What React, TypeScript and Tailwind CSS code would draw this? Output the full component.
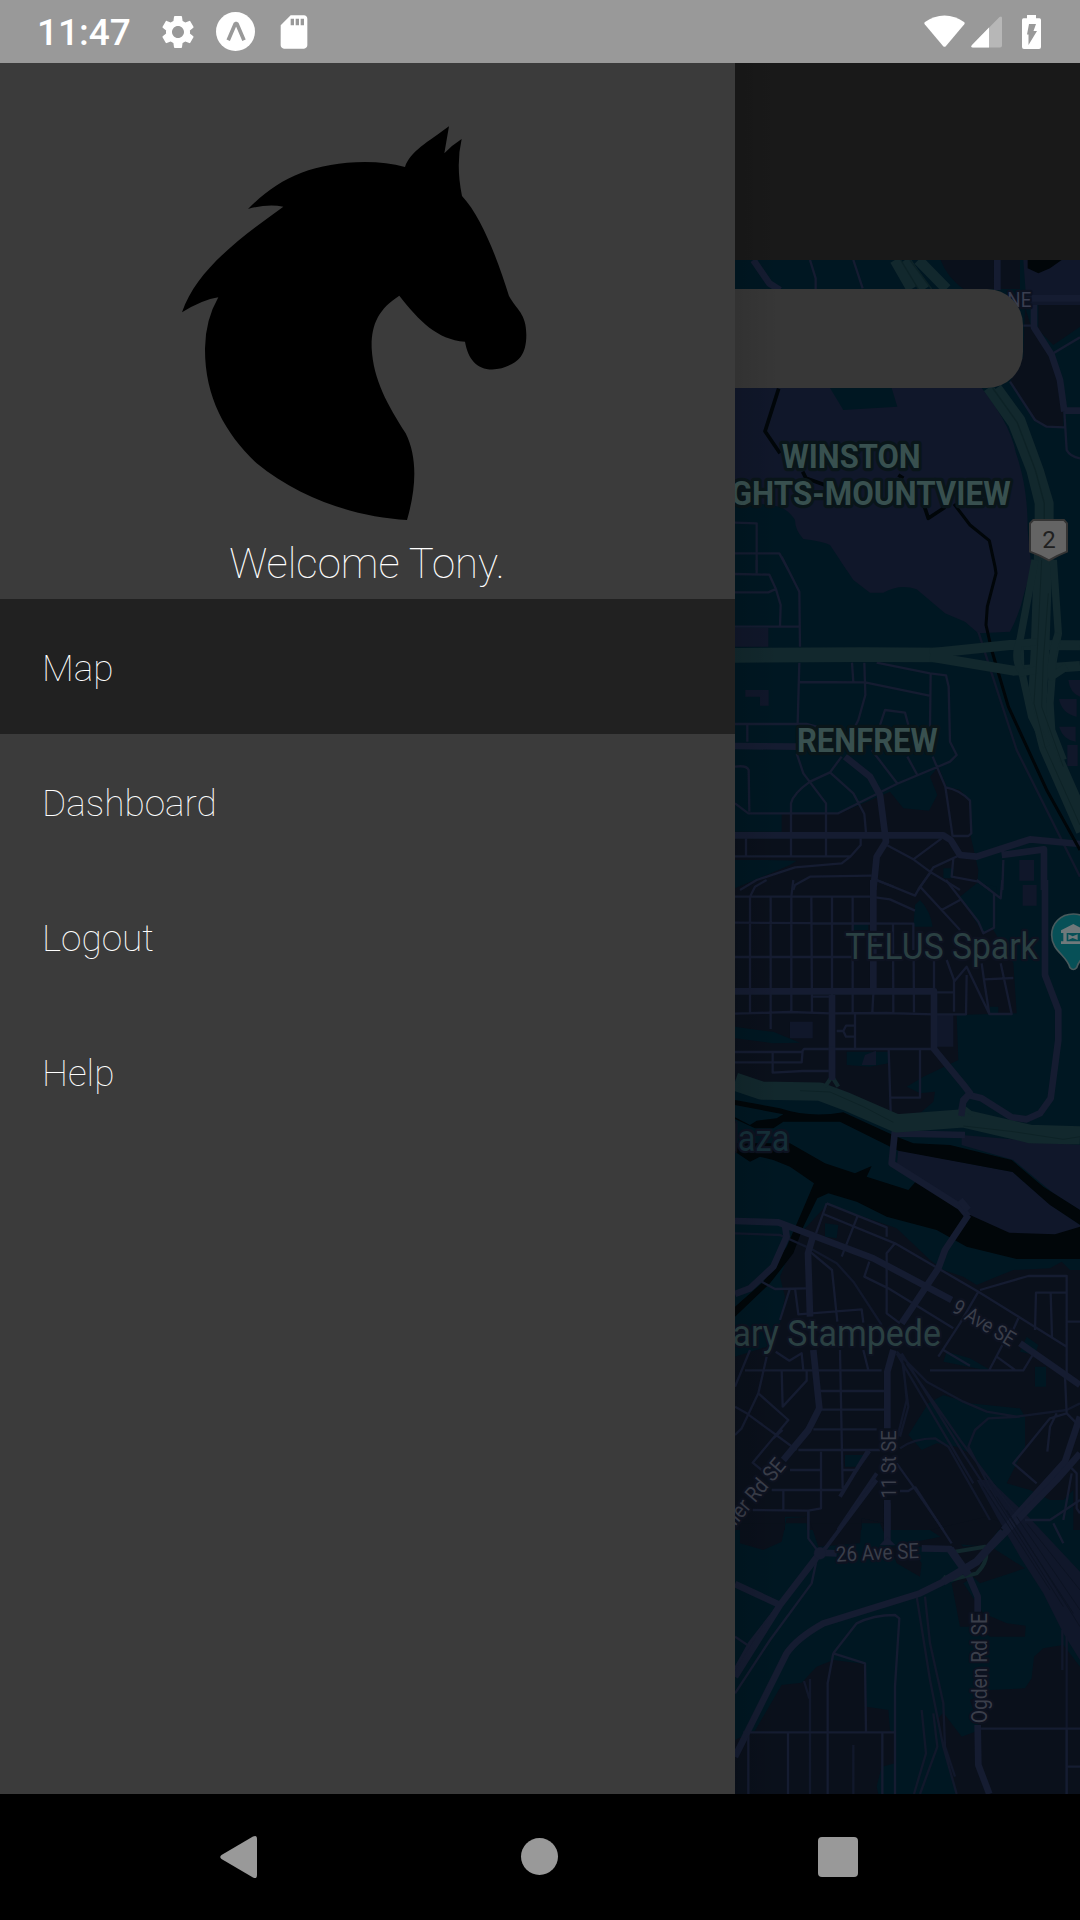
import React from "react";
import { MdSettings, MdSdCard } from "react-icons/md";

const LAND = "#001722";
const URBAN = "#0a101b";
const PARK = "#10172a";
const ROAD = "#151c31";
const HIGHWAY = "#12282d";
const WATER = "#010609";

type Section = {
  y: number;
  urban?: string;
  land?: string;
  park?: string;
  water?: string;
  creek?: string;
  rail?: string;
  thin?: string;
  mid?: string;
  wide?: string;
};

const sections: Section[] = [
  {
    y: 240,
    urban:
      "M632 60H870V147H700Q650 110 632 60ZM885 200L905 265L965 345L1000 500V560H950L915 540L840 425L880 350ZM925 195H1050V260L970 315L925 270Z",
    park:
      "M15 444H755C800 500 845 570 858 640C885 720 893 790 893 870L905 990H350L300 915Q280 905 220 897Q195 870 195 840Q180 815 150 800L15 780ZM880 60H1050V195H890Z",
    water: "M893 60H995L960 85L925 100L893 85Z",
    creek: "M146 446L105 574L150 640M218 695L228 715L300 740M505 705L520 715M580 790L595 835L645 802",
    thin:
      "M240 60L257 115V147M370 60L398 145M970 340L1050 292M880 257H905M840 425L915 540L950 560L1003 562M1003 515L1010 630Q1020 650 1050 655M15 848L80 850V990M15 940H148L175 990",
    mid: "",
    wide: "M70 60L118 130L150 150M802 60V150M905 175H1050M912 195V262L965 345L990 420L1003 515M1003 512H1050",
  },
  {
    y: 560,
    park:
      "M330 0H915L885 90Q870 160 840 215L745 220L705 185L645 160L560 88Q510 70 460 98H420L370 60ZM15 204H115V260H15ZM46 390H116V437H90V410H46ZM1015 360H1050V410Q1020 400 1015 360ZM987 417H1040V470Q995 460 987 417ZM987 500H1037V545Q1000 540 987 500ZM1012 555H1043V618H1012ZM868 900H912V962H868Z",
    rail: "M745 215L785 340L860 570L1050 950",
    thin:
      "M80 0V40M15 42L118 44L138 88L152 135L150 198M15 97H115L140 86M15 200H208M155 -10L208 95L210 260M208 308L203 490M208 366L405 367L598 407M366 308L370 366M403 308L406 405L385 480L375 500M440 308L600 340L648 346L656 380L660 545L680 585L660 605L500 672L325 760H55L15 730M602 340L600 500M450 495L465 450L525 458L535 495M15 492H230L260 500M52 492V545M15 620Q50 615 56 630L58 755M200 580L220 640L288 730V887M335 590L300 637L240 665Q190 700 183 730V887M300 637L370 700L403 762L408 818M425 570L503 672M532 590L562 645M608 590L646 680L668 830M648 682Q690 690 720 722L724 820L715 828H668M15 889H362M48 835V887M392 835V855L362 889L335 910L195 922L80 960L30 990M470 855L550 898L635 835M550 898L600 935L650 965L690 990M690 885L610 922L565 990M670 895L665 950L745 965L780 990M820 900L817 990M425 947L240 950L195 975L190 990M425 955L490 980",
    mid: "",
    wide:
      "M15 558L200 560M345 590L420 650L450 705L468 845L440 890L430 990M15 826H640L662 840L690 885L740 890L900 838L1050 852M815 885L942 868V990",
  },
  {
    y: 880,
    urban:
      "M155 -200H330L480 -265L520 -215L597 -208L622 -255L600 -310L625 -340L650 -280L690 -270L720 -238V-140L745 -30L740 30L690 50L790 150L850 250L860 400L680 405L685 540L580 590L530 620L570 640L615 635L610 665L570 700L500 715L15 600V-145H155Z",
    land:
      "M15 440Q80 450 130 455L210 488L130 490L15 475ZM350 515H475V550L420 560L350 555ZM555 75L570 60Q600 90 608 140H550ZM15 -60H110L200 -58L180 -45L15 25ZM690 50L740 10L800 20V130L760 160ZM640 -35H670V-5H640ZM370 130H415V150H370ZM780 380H805V400H780Z",
    park:
      "M180 425H248V475H180ZM610 405H670V500H610ZM395 555L405 525L438 512V555ZM878 15H920V77H878ZM695 765L1050 795V990L970 940L850 840L695 795Z",
    water:
      "M15 660L150 685Q240 715 340 697L500 770L550 790L660 795L845 840L940 920L1050 990V1034L960 975L848 876L505 812L330 725H160L130 745L75 745L15 717V712L60 735L80 722L140 715L160 703L15 675ZM15 790H180L285 850L375 880L425 858L410 890L535 930L557 905L700 990L720 1005L838 1058L975 1063L1050 1040V1137H860L710 1100L620 1050L470 1010L380 965L295 940L262 955L220 1040L190 1120L120 1210L15 1310V1280L100 1205L170 1100L218 990L252 910L180 860L130 840L90 830L60 845L15 815Z",
    thin:
      "M15 50H420L480 58L555 92M15 128L550 131V210M15 231H380M60 50V397M122 50V447M184 50V397M244 50L246 397M306 50V397M368 50V397M489 131L490 397M551 240L552 397M612 240V330M430 340L427 397M15 401L180 396L300 400L470 399L610 403H708L710 285M375 401V507M320 453H340L348 437H375M340 453L348 470H375M15 516H215L222 507H612M15 547H215L218 510M128 516V578L218 573H300M476 507L482 695M570 507V653H482M245 350H300M440 0L555 47L570 20L600 -20M570 20L635 90L690 150M648 0L745 125L760 160L792 143V40M690 60L635 90M650 240L672 300V395M672 337H615M672 305L710 260L778 402H845L812 250M755 250L762 300L778 402M762 298L850 294M190 0L184 50M60 50L75 20L110 0M740 0L812 55L817 0",
    mid: "",
    wide:
      "M430 0V325M15 334H612V507L705 620L720 640L700 660L692 705M306 345V600M715 645L755 655L845 712L890 718L930 700L962 655L985 480V390L945 285V0M495 750L485 850L690 980L715 1010M495 760L705 765",
  },
  {
    y: 1200,
    urban:
      "M200 110L240 70L290 15L400 50L500 85L600 180L640 210L700 230L740 255L800 230L850 210L960 205L995 185L1020 210H1050V990H15V470L110 440L150 370L165 290L150 230Z",
    land:
      "M595 610L640 585L720 610L870 625L885 650V740L830 850L900 870L960 900L1000 900L1030 870V990H870L720 760L680 740L620 730L575 750L535 705ZM285 70L325 75L320 115L285 110ZM650 455L720 475L790 515L640 485ZM915 500H948V560H915ZM345 765H415L385 800H345ZM890 410L925 435L915 465L870 455ZM165 950H230V990H165ZM395 955L460 970V990H395Z",
    rail:
      "M15 100L150 105L240 145L320 190L370 245L455 375M515 460L700 760L850 990M500 460L730 850M530 490L690 720L870 960M515 470L535 620L510 710M520 490L530 600L500 720M500 455L590 545L700 605L770 635L860 650L1010 630L1050 610M510 745Q550 715 615 715L655 740L780 960M870 650L775 655L735 690L715 740L800 900L850 980",
    thin:
      "M290 10L470 82V110M290 10L258 100M280 42L495 130L745 275L1010 440M495 130L470 160V340L510 370M382 50L335 170M240 155L306 210L322 365M418 185L403 230L475 265L670 385M95 245L135 267L230 265M180 265L150 360M195 265L205 343L395 328L400 368M745 275L690 370L625 470M640 450L720 497M750 270L895 228H1010V530M915 390L918 278H1010M962 280L966 410M865 355L845 400M1010 365H1050M600 511H880L908 465M820 430L778 510M800 470L855 510M45 511H455M60 450L15 560M110 470L85 580L35 685L15 705M155 511L158 620L230 542V511M85 580L175 660L68 788L95 810M15 620L50 640L200 750M130 715L158 690M137 455L178 482L215 460L220 511M330 450L338 865M400 450L415 511M270 573H465M270 629H465M250 688H440M205 750H450M180 810H270M340 810H385M125 870H338L420 755M68 930L235 932L273 925V755M160 870V930M235 932V990M500 790L550 860L640 990M510 873H535L555 860M1005 530L1010 640L1050 680M1010 640L960 655L850 790L920 850M980 640L960 680L952 755M1020 800L1040 820V925L1050 940M1025 820L1000 960",
    mid: "M415 750L330 890M440 820L325 990",
    wide:
      "M15 63L145 67L430 175L665 300M870 430L1050 555M165 75L170 110L130 200L60 265L15 282M250 105L234 160L240 350M250 450L268 625L235 690L160 780M715 45L645 150L625 205L515 370M490 450L472 515V685M472 910V990M1050 650L1005 785L820 990M690 0L715 30",
  },
  {
    y: 1480,
    urban:
      "M30 130V190L100 210L155 185L170 115L235 110L265 200L390 190L395 115L460 130L480 200L550 210L575 250L570 290L500 250L480 200L660 165L700 200L775 195L885 265L750 310L730 290L700 310L760 400L830 430L887 437L885 470H780L740 440H690L665 310L700 290L660 200H480L450 130H30ZM75 752L155 615L215 608L260 560L310 540L405 552L410 680L475 690L480 750L495 760V942H15V780ZM640 698L695 770L750 750L720 660L780 630L885 625L905 595L912 530L940 505L1000 495L1050 560V942H680L620 720ZM600 150L770 110L820 130L770 200L660 190Z",
    land: "M440 920L455 860L495 850V942H445Z",
    park: "M740 0H780L895 110L1050 275V540L1000 460L940 340L870 230L800 110Z",
    rail:
      "M560 350L600 600L640 800L680 942M585 350L600 490L640 670L645 800L675 890M575 690L588 820L552 942M610 700L622 800L570 942M240 597V942M222 603L238 655M370 795V942M997 450V570M1010 470V942",
    thin:
      "M235 90V175L265 215L245 310L120 480L15 640M555 20L665 190M310 520L380 430Q430 405 495 405L508 415L495 620V942M310 520L405 550L408 755M310 520L293 610V942M15 470L60 500M40 757H495M55 757V942M174 757V942M457 757V942M750 746H1050M1010 746V942M1010 860H1050M885 120H960L1050 60M970 130L1000 190",
    mid: "M440 0L290 200L230 270L60 490L15 570",
    wide:
      "M472 60V195M265 218L320 220M575 205L660 207L715 285L743 350V395M1050 -80L980 0L740 245L640 305L570 340L280 430Q200 475 170 520L15 830M15 312L150 375M265 225L150 375L15 590M743 735L745 855L778 942",
  },
];

const layerAt = (y: number) => `translate(730 ${y}) scale(0.33333)`;

function MapLabel(props: {
  x: number;
  y: number;
  size: number;
  length: number;
  color: string;
  halo?: string;
  haloWidth?: number;
  weight?: number;
  rotate?: number;
  children: string;
}) {
  return (
    <text
      x={props.x}
      y={props.y}
      fontSize={props.size}
      fontWeight={props.weight ?? 400}
      fill={props.color}
      stroke={props.halo ?? "#0d1220"}
      strokeWidth={props.haloWidth ?? 14}
      strokeLinejoin="round"
      paintOrder="stroke"
      textLength={props.length}
      lengthAdjust="spacingAndGlyphs"
      transform={props.rotate ? `rotate(${props.rotate} ${props.x} ${props.y})` : undefined}
    >
      {props.children}
    </text>
  );
}

function CityMap() {
  return (
    <svg className="block h-full w-full font-[Roboto]" viewBox="735 260 345 1534" fill="none">
      <rect x="735" y="259" width="345" height="1536" fill={LAND} />
      {sections.map((s) => (
        <g key={s.y} transform={layerAt(s.y)}>
          <path d={s.urban} fill={URBAN} />
          <path d={s.land} fill={LAND} />
          <path d={s.park} fill={PARK} />
        </g>
      ))}
      <g transform={layerAt(240)}>
        <path d="M300 444H485L502 500L340 510Z" fill={LAND} />
      </g>
      <g transform={layerAt(880)}>
        <path d="M505 810L848 876L955 970L1050 1035V1045L975 1068L838 1062L720 1014L560 910L500 860Z" fill={PARK} />
      </g>
      {sections.map((s) => (
        <g key={s.y} transform={layerAt(s.y)} strokeLinejoin="round">
          <path d={s.water} fill={WATER} />
          <path d={s.creek} stroke={WATER} strokeWidth="11" />
          <path d={s.rail} stroke="#11182b" strokeWidth="7" />
          <path d={s.thin} stroke={ROAD} strokeWidth="7" />
          <path d={s.mid} stroke={ROAD} strokeWidth="12" />
          <path d={s.wide} stroke={ROAD} strokeWidth="20" />
        </g>
      ))}

      {/* Creek running beside the freeway */}
      <g transform={layerAt(560)} stroke={WATER} strokeLinejoin="round">
        <path d="M672 -168L720 -105L778 -58L795 20L798 40L772 140L768 195L785 270L835 440L950 690L1050 870" strokeWidth="9" />
      </g>

      {/* Freeways and interchange */}
      <g stroke={HIGHWAY} strokeLinejoin="round">
        <g transform={layerAt(240)}>
          <path d="M495 60L545 147M525 60L585 147M565 60L650 147" strokeWidth="32" />
          <path d="M775 444L850 550L905 690L930 790V990M800 444L870 540L925 690L955 790V990" strokeWidth="32" />
          <path d="M788 444L862 548L916 690L943 790V990M512 60L565 147M540 60L605 147" stroke="#0d2226" strokeWidth="4" />
        </g>
        <g transform={layerAt(560)}>
          <path d="M15 286L400 284L660 285" strokeWidth="44" />
          <path d="M600 280L840 255L1050 256M600 290L850 332L1050 318" strokeWidth="30" />
          <path d="M940 -20L930 270L922 430L955 560L1065 810" strokeWidth="56" />
          <path d="M915 0L870 240L872 320L905 470L950 560M970 0L985 220L970 300L960 430L965 510L1000 600" strokeWidth="22" />
          <path d="M870 240Q850 290 872 330M985 220Q960 290 965 350L1010 320M870 250L920 245M865 340L920 330" strokeWidth="22" />
          <path d="M935 0L922 270L912 430L945 560L1050 795M955 100L940 300L935 440L1000 620" stroke="#0d2226" strokeWidth="3" />
        </g>
        <g transform={layerAt(880)}>
          <path d="M15 605L95 632L270 635L350 665L500 730L700 715L900 762L1050 766" strokeWidth="55" />
          <path d="M285 620L306 590L325 620M690 705L705 685L730 705" strokeWidth="12" />
          <path d="M210 632L300 636L400 680L490 727M700 738L850 755L1000 778L1050 770" stroke="#0d2226" strokeWidth="3" />
        </g>
        <g transform={layerAt(1480)}>
          <path d="M675 215L765 200Q780 240 740 280L660 300L640 290" strokeWidth="12" />
        </g>
      </g>
      <g transform={layerAt(880)} stroke={ROAD} strokeWidth="19">
        <path d="M306 500V600M720 640L700 665L694 708" />
      </g>
      <g transform={layerAt(1480)} stroke={ROAD}>
        <path d="M820 155L740 245L640 305M660 207L715 285" strokeWidth="24" />
        <circle cx="270" cy="220" r="18" fill={ROAD} />
        <path d="M450 195L472 170L495 195Z" fill={ROAD} />
        <path d="M760 20L960 330M780 30L1000 380M800 50L1030 400M830 90L1050 440M860 110L1050 390M890 130L1050 330" stroke="#0c1322" strokeWidth="3" />
      </g>

      {/* Labels */}
      <g transform={layerAt(240)}>
        <MapLabel x={832} y={202} size={63} length={72} color="#3a3e50">NE</MapLabel>
        <MapLabel x={155} y={684} size={100} length={417} weight={700} color="#38504f" halo="#091519" haloWidth={20}>WINSTON</MapLabel>
        <MapLabel x={-145} y={795} size={100} length={987} weight={700} color="#38504f" halo="#091519" haloWidth={20}>HEIGHTS-MOUNTVIEW</MapLabel>
        <path d="M910 840H1002L1011 850V935Q985 945 957 961Q928 945 900 935V850Z" fill="#646464" stroke="#343434" strokeWidth="6" />
        <text x="957" y="925" fontSize="72" textAnchor="middle" fill="#202020">2</text>
      </g>
      <g transform={layerAt(560)}>
        <MapLabel x={201} y={577} size={100} length={422} weight={700} color="#38504f" halo="#091519" haloWidth={20}>RENFREW</MapLabel>
      </g>
      <g transform={layerAt(880)}>
        <MapLabel x={346} y={237} size={109} length={577} color="#2a4042">TELUS Spark</MapLabel>
        <MapLabel x={-62} y={813} size={109} length={240} color="#152f38">Plaza</MapLabel>
        <path d="M1030 102C991 102 965 131 965 165C965 213 1010 225 1020 263Q1030 274 1040 263C1050 225 1095 213 1095 165C1095 131 1069 102 1030 102Z" fill="#075057" stroke="#485a5d" strokeWidth="5" />
        <path d="M1030 132L993 151V159H1000V184H993V192H1067V184H1060V159H1067V151ZM1010 159H1050V184H1010Z" fill="#70797b" fillRule="evenodd" />
        <path d="M1015 163L1028 169L1043 163V180L1028 174L1015 180Z" fill="#70797b" />
      </g>
      <g transform={layerAt(1200)}>
        <MapLabel x={-196} y={438} size={109} length={829} color="#2a4042">Calgary Stampede</MapLabel>
        <MapLabel x={662} y={334} size={63} length={208} rotate={31} color="#3a3e4a">9 Ave SE</MapLabel>
        <MapLabel x={497} y={895} size={63} length={204} rotate={-90} color="#3a3e4a">11 St SE</MapLabel>
        <MapLabel x={-36} y={1040} size={65} length={318} rotate={-49.500} color="#3a3e4a">Spiller Rd SE</MapLabel>
      </g>
      <g transform={layerAt(1480)}>
        <MapLabel x={319} y={245} size={64} length={249} rotate={-2.500} color="#3a3e4a">26 Ave SE</MapLabel>
        <MapLabel x={771} y={730} size={64} length={331} rotate={-90} color="#3a3e4a">Ogden Rd SE</MapLabel>
      </g>
    </svg>
  );
}

function StatusBar() {
  return (
    <header className="flex h-[63px] shrink-0 items-center bg-[#999999] pr-[39px] pl-[37px] text-white">
      <span className="w-[121px] pt-[2px] text-[37px] leading-none font-medium">11:47</span>
      <MdSettings size={40} />
      <svg className="ml-[18px]" width="39" height="39" viewBox="0 0 39 39">
        <circle cx="19.5" cy="19.5" r="19.5" fill="#fff" />
        <path d="M12.2 28.2L19.4 11.5H20.8L28 28.2" fill="none" stroke="#999" strokeWidth="3.7" strokeLinejoin="bevel" />
      </svg>
      <MdSdCard size={40} className="ml-[19px]" />
      <div className="ml-auto flex items-center">
        <svg width="41" height="33" viewBox="0 0 41 33">
          <path d="M.7 9.2Q-.2 8 1 7Q10 .5 20.500 .5Q31 .5 40 7Q41.200 8 40.300 9.200L22 31Q20.500 32.700 19 31Z" fill="#fff" />
        </svg>
        <svg className="ml-[6px]" width="31" height="32" viewBox="0 0 31 32">
          <path d="M28.500 1Q31 -.5 31 2V29.500Q31 31.500 29 31.500H2Q-1 31.500 1 29Z" fill="#fff" fillOpacity=".3" />
          <path d="M18 11.500V31.500H2Q-1 31.500 1 29Z" fill="#fff" />
        </svg>
        <svg className="ml-[20px]" width="19" height="34" viewBox="0 0 19 34">
          <path d="M5 0H14V3.300H17.500Q19 3.300 19 5V32Q19 34 17 34H2Q0 34 0 32V5Q0 3.300 1.500 3.300H5Z" fill="#fff" />
          <path d="M7 9H14L11.500 16H15L6.500 30V19.500H5Z" fill="#999" />
        </svg>
      </div>
    </header>
  );
}

function HorseHead() {
  return (
    <svg className="block" width="370" height="420" viewBox="0 0 1110 1260">
      <path
        d="M837 49L823 130Q845 106 875 87Q857 165 876 258C935 320 985 455 1017 558C1040 600 1069 610 1069 675C1069 750 1030 762 995 775C930 790 895 755 885 695C800 688 748 633 688 557C625 597 603 645 605 715C610 810 653 885 707 970C742 1040 740 1130 711 1230C565 1222 390 1168 260 1060C165 970 104 860 105 715Q106 630 145 562Q98 569 36 607C80 478 213 382 340 290Q292 281 234 297C325 205 425 158 585 156Q650 156 705 171C720 125 775 95 837 49Z"
        fill="#000"
      />
    </svg>
  );
}

const items = ["Map", "Dashboard", "Logout", "Help"];

function Drawer() {
  return (
    <aside className="flex w-[735px] shrink-0 flex-col bg-[#3b3b3b] text-white">
      <div className="flex h-[536px] flex-col pt-[47px]">
        <div className="pl-[170px]">
          <HorseHead />
        </div>
        <p className="mt-[9px] pr-[1px] text-center text-[42px] leading-[49px] font-thin">Welcome Tony.</p>
      </div>
      <nav className="flex flex-col">
        {items.map((label, i) => (
          <a
            key={label}
            className={`flex h-[135px] items-center pl-[42px] text-[37px] font-thin ${i === 0 ? "bg-[#212121]" : ""}`}
          >
            <span className="pt-[4px]">{label}</span>
          </a>
        ))}
      </nav>
    </aside>
  );
}

function NavigationBar() {
  return (
    <footer className="flex h-[126px] shrink-0 items-center bg-black pl-[220px]">
      <svg width="38" height="44" viewBox="0 0 38 44">
        <path d="M33 1.500Q37 -.5 37 4V40Q37 44.500 33 42.500L1.500 24Q-1 22 1.500 20Z" fill="#999" />
      </svg>
      <span className="mb-[1px] ml-[263px] size-[37px] rounded-full bg-[#999999]" />
      <span className="ml-[260px] size-[40px] rounded-[4px] bg-[#999999]" />
    </footer>
  );
}

export default function App() {
  return (
    <div className="flex h-[1920px] w-[1080px] flex-col overflow-hidden bg-black font-[Roboto,sans-serif]">
      <StatusBar />
      <div className="flex h-[1731px] shrink-0">
        <Drawer />
        <main className="relative flex w-[345px] flex-col overflow-hidden">
          <div className="h-[197px] shrink-0 bg-[#191919]" />
          <div className="relative h-[1534px]">
            <CityMap />
            <div className="absolute top-[29px] left-0 h-[99px] w-[288px] rounded-r-[36px] bg-[#373737]" />
          </div>
          <div className="absolute inset-y-0 left-0 w-[44px] bg-linear-to-r from-black/10 to-transparent" />
        </main>
      </div>
      <NavigationBar />
    </div>
  );
}
